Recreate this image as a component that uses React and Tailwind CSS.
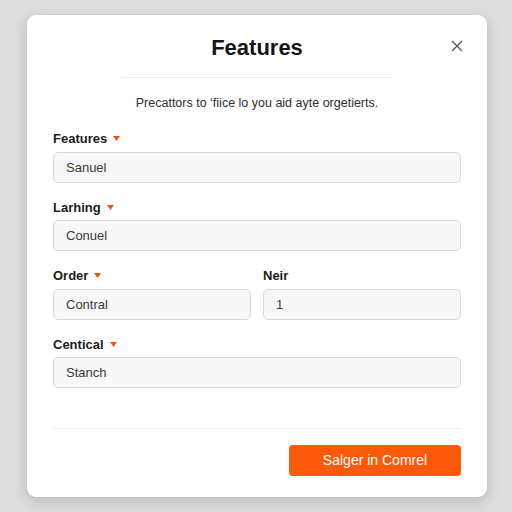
const Caret = () => (
  <svg width="7" height="5" viewBox="0 0 7 5" className="ml-1.5 inline-block">
    <path d="M0 0h7L3.5 5z" fill="#f0501e" />
  </svg>
);

const Field = ({ label, value, caret = true }) => (
  <div className="flex flex-col">
    <label className="flex items-center h-[18px] text-[13px] font-semibold text-[#1c1c1c]">
      {label}
      {caret && <Caret />}
    </label>
    <div className="mt-[4px] h-[31px] flex items-center px-3 rounded-[5px] border border-[#dadada] bg-[#f7f7f7] text-[13px] text-[#3a3a3a]">
      {value}
    </div>
  </div>
);

export default function App() {
  return (
    <div className="w-[512px] h-[512px] bg-[#dedede] pt-[15px] pl-[27px]" style={{ fontFamily: '"Liberation Sans", Arial, sans-serif' }}>
      <div className="w-[460px] h-[482px] bg-white rounded-[9px] shadow-[0_4px_14px_rgba(0,0,0,0.18)] px-[26px] pt-[21px]">
        <div className="relative flex justify-center">
          <h1 className="text-[22px] font-bold text-[#151515] leading-[24px]">Features</h1>
          <button className="absolute right-[-2px] top-[4px] text-[#555]">
            <svg width="12" height="12" viewBox="0 0 12 12">
              <path d="M1 1l10 10M11 1L1 11" stroke="#555" strokeWidth="1.4" />
            </svg>
          </button>
        </div>
        <div className="mx-auto mt-[17px] w-[272px] h-px bg-[#ececec]" />
        <p className="mt-[16px] text-center text-[12.5px] text-[#2e2e2e]">
          Precattors to &#8216;fiice lo you aid ayte orgetierts.
        </p>
        <div className="mt-[17px] flex flex-col gap-[15.5px]">
          <Field label="Features" value="Sanuel" />
          <Field label="Larhing" value="Conuel" />
          <div className="grid grid-cols-2 gap-[12px]">
            <Field label="Order" value="Contral" />
            <Field label="Neir" value="1" caret={false} />
          </div>
          <Field label="Centical" value="Stanch" />
        </div>
        <div className="mt-[40px] h-px bg-[#eeeeee]" />
        <div className="mt-[16px] flex justify-end">
          <button className="w-[172px] h-[31px] rounded-[4px] bg-[#fa5a0a] text-white text-[14px]">
            Salger in Comrel
          </button>
        </div>
      </div>
    </div>
  );
}
